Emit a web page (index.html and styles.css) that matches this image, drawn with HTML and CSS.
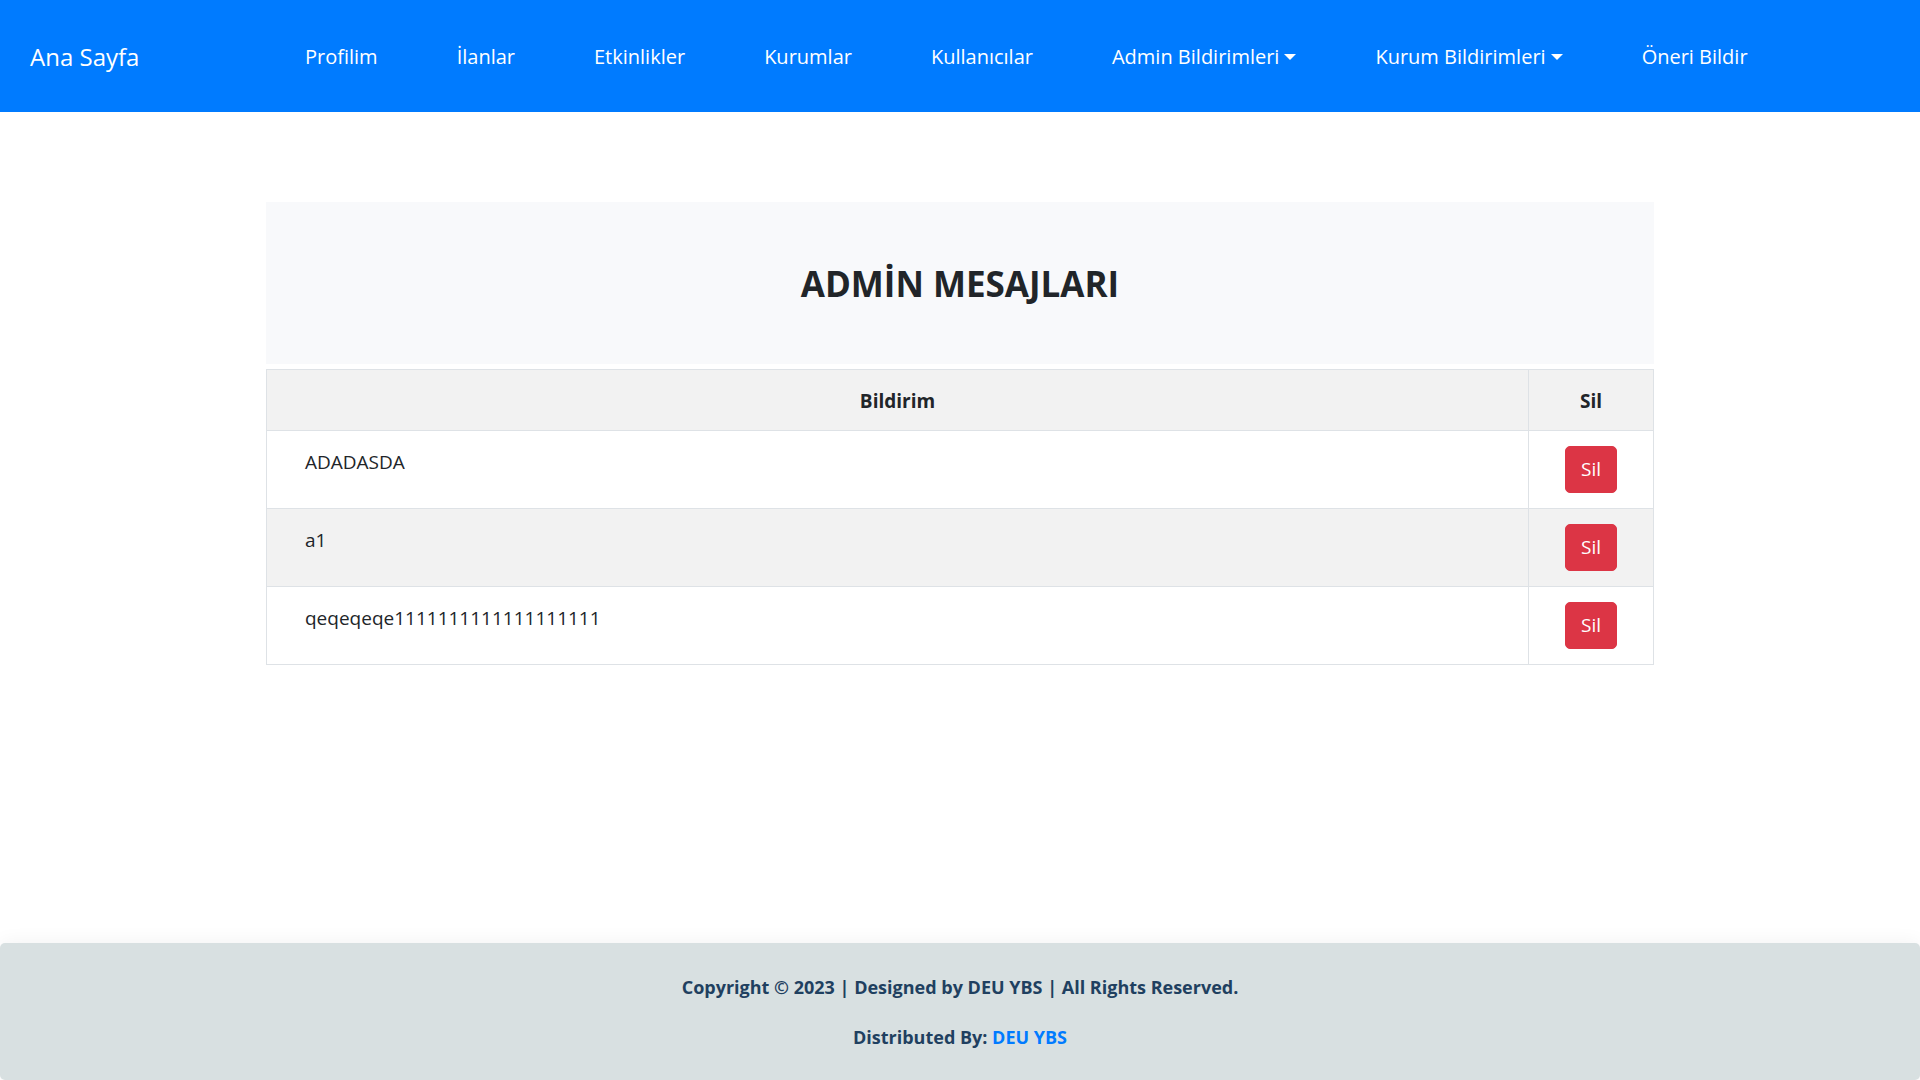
FILE: index.html
```html
<!DOCTYPE html>
<html lang="tr">
<head>
<meta charset="utf-8">
<meta name="viewport" content="width=device-width, initial-scale=1">
<title>Admin Mesajları</title>
<link rel="stylesheet" href="styles.css">
</head>
<body>
<nav class="navbar">
  <a class="brand" href="#">Ana Sayfa</a>
  <ul class="nav-list">
    <li><a class="nav-link" href="#">Profilim</a></li>
    <li><a class="nav-link" href="#">İlanlar</a></li>
    <li><a class="nav-link" href="#">Etkinlikler</a></li>
    <li><a class="nav-link" href="#">Kurumlar</a></li>
    <li><a class="nav-link" href="#">Kullanıcılar</a></li>
    <li><a class="nav-link dropdown" href="#">Admin Bildirimleri</a></li>
    <li><a class="nav-link dropdown" href="#">Kurum Bildirimleri</a></li>
    <li><a class="nav-link" href="#">Öneri Bildir</a></li>
  </ul>
</nav>
<main class="content">
  <header class="banner">
    <h1 class="title">ADMİN MESAJLARI</h1>
  </header>
  <table class="messages">
    <thead>
      <tr><th>Bildirim</th><th class="action">Sil</th></tr>
    </thead>
    <tbody>
      <tr><td class="message">ADADASDA</td><td class="action"><button class="btn-delete" type="button">Sil</button></td></tr>
      <tr><td class="message">a1</td><td class="action"><button class="btn-delete" type="button">Sil</button></td></tr>
      <tr><td class="message">qeqeqeqe1111111111111111111</td><td class="action"><button class="btn-delete" type="button">Sil</button></td></tr>
    </tbody>
  </table>
</main>
<footer class="footer">
  <p class="footer-line">Copyright © 2023 | Designed by DEU YBS | All Rights Reserved.</p>
  <p class="footer-line">Distributed By: <a class="footer-link" href="#">DEU YBS</a></p>
</footer>
</body>
</html>
```
FILE: styles.css
```css
* {
  box-sizing: border-box;
}

body {
  display: flex;
  flex-direction: column;
  min-height: 100vh;
  margin: 0;
  background: #fff;
  color: #212529;
  font-family: "Segoe UI", "Open Sans", "Noto Sans", sans-serif;
  font-size: 19px;
  line-height: 30px;
}

.navbar {
  display: flex;
  align-items: center;
  min-height: 112px;
  padding: 2px 30px 0;
  background: #007bff;
}

.brand {
  flex: 0 0 275px;
  color: #fff;
  font-size: 24px;
  text-decoration: none;
}

.nav-list {
  display: flex;
  flex-wrap: wrap;
  gap: 0 79px;
  margin: 0;
  padding: 0;
  list-style: none;
}

.nav-link {
  display: flex;
  align-items: center;
  gap: 5px;
  color: #fff;
  font-size: 20px;
  text-decoration: none;
  white-space: nowrap;
}

.dropdown::after {
  content: "";
  border-top: 6px solid;
  border-right: 6px solid transparent;
  border-left: 6px solid transparent;
}

.content {
  flex: 1;
  width: 100%;
  max-width: 1388px;
  margin: 0 auto;
  padding: 90px 0 30px;
}

.banner {
  margin-bottom: 5px;
  padding: 61px 20px 59px;
  background: #f8f9fb;
  text-align: center;
}

.title {
  margin: 0;
  font-size: 35px;
  font-weight: 700;
  line-height: 42px;
}

.messages {
  width: 100%;
  border-collapse: collapse;
}

.messages th,
.messages td {
  padding: 16px 15px 14px;
  border: 1px solid #dee2e6;
  vertical-align: top;
}

.messages th {
  background: #f2f2f2;
  font-weight: 700;
}

.messages tbody tr:nth-child(even) {
  background: #f2f2f2;
}

.messages .message {
  padding-left: 38px;
}

.messages td.action {
  padding: 15px;
}

.messages .action {
  width: 125px;
  text-align: center;
}

.btn-delete {
  display: inline-block;
  padding: 8px 15px;
  border: 1px solid #dc3545;
  border-radius: 5px;
  background: #dc3545;
  color: #fff;
  font: inherit;
  line-height: 29px;
  vertical-align: top;
  cursor: pointer;
}

.footer {
  display: flex;
  flex-direction: column;
  gap: 24px;
  padding: 31px 20px 30px;
  border-radius: 5px;
  background: #d8e0e1;
  box-shadow: 0 0 20px rgba(0, 0, 0, 0.06);
  color: #1f4060;
  font-size: 18px;
  font-weight: 700;
  line-height: 26px;
  text-align: center;
}

.footer-line {
  margin: 0;
}

.footer-link {
  color: #007bff;
  text-decoration: none;
}
```
